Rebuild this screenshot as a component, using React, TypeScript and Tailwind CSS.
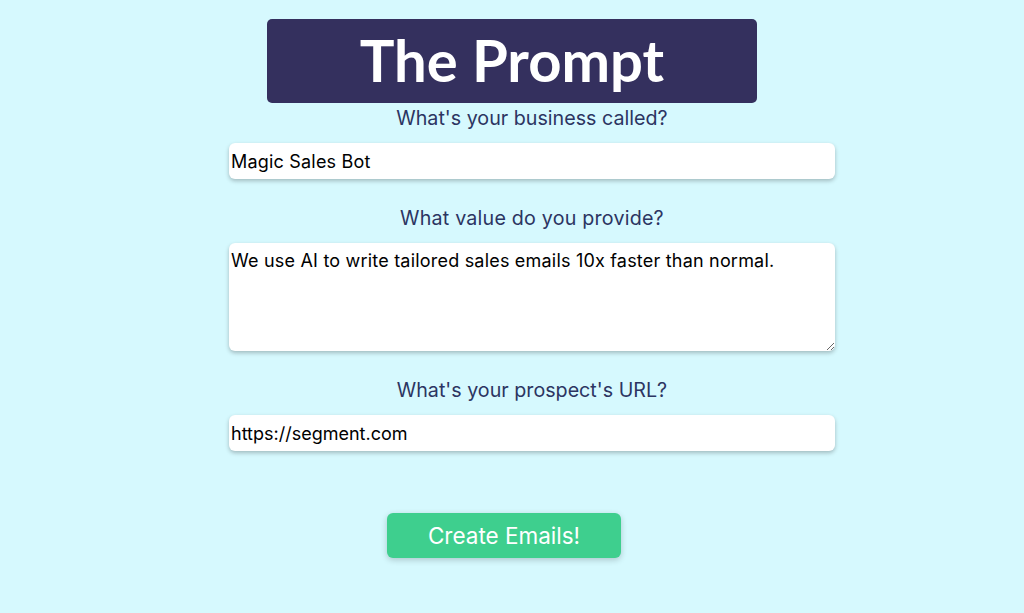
export default function App() {
  return (
    <div className="min-h-[613px] w-full bg-[#d6f9fe] font-['Inter',sans-serif]">
      <div className="flex flex-col items-center">
        {/* Title */}
        <div className="mt-[19px] flex h-[84px] w-[490px] items-center justify-center rounded-[5px] bg-[#34305e]">
          <h1 className="pb-[2px] font-['Lato',sans-serif] text-[58px] font-bold leading-none text-white">
            The Prompt
          </h1>
        </div>

        <div className="ml-[40px] flex w-[606px] flex-col items-center">
          <label className="mb-[11px] mt-[1px] text-[19.7px] leading-[28px] text-[#2c3562]">
            What&apos;s your business called?
          </label>
          <input
            className="h-[36px] w-full rounded-[6px] bg-white px-[2px] text-[18px] tracking-[0.2px] text-black shadow-[0_2px_4px_rgba(0,0,0,0.25)] outline-none"
            defaultValue="Magic Sales Bot"
          />

          <label className="mb-[11px] mt-[25px] text-[19.7px] leading-[28px] tracking-[0.2px] text-[#2c3562]">
            What value do you provide?
          </label>
          <textarea
            className="h-[108px] w-full rounded-[6px] bg-white px-[2px] pt-[6px] text-[18px] leading-[24px] tracking-[0.2px] text-black shadow-[0_2px_4px_rgba(0,0,0,0.25)] outline-none"
            defaultValue="We use AI to write tailored sales emails 10x faster than normal."
          />

          <label className="mb-[11px] mt-[25px] text-[19.7px] leading-[28px] text-[#2c3562]">
            What&apos;s your prospect&apos;s URL?
          </label>
          <input
            className="h-[36px] w-full rounded-[6px] bg-white px-[2px] text-[18px] text-black shadow-[0_2px_4px_rgba(0,0,0,0.25)] outline-none"
            defaultValue="https://segment.com"
          />
        </div>

        <button className="mr-[16px] mt-[62px] h-[45px] w-[234px] rounded-[6px] bg-[#3ecf8e] text-[22.5px] text-white shadow-[0_2px_6px_rgba(0,0,0,0.2)]">
          Create Emails!
        </button>
      </div>
    </div>
  );
}
